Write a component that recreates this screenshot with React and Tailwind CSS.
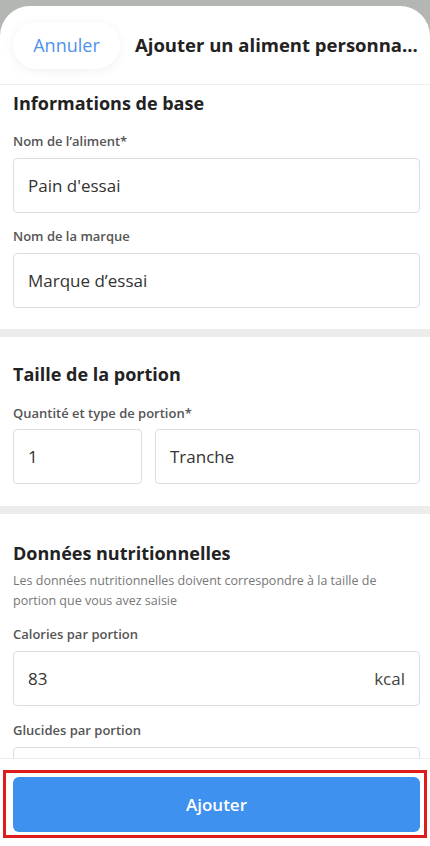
import React from "react";

const Field = ({ label, value, suffix }) => (
  <div>
    <p className="text-[13px] font-semibold text-[#555] leading-5">{label}</p>
    <div className="mt-[7px] h-[55px] border border-[#dcdde3] rounded-[4px] flex items-center justify-between px-[14px]">
      <span className="text-[17px] text-[#333]">{value}</span>
      {suffix && <span className="text-[17px] text-[#444]">{suffix}</span>}
    </div>
  </div>
);

const Band = () => <div className="h-[8px] bg-[#ececec]" />;

const App = () => {
  return (
    <div
      className="w-[430px] h-[846px] bg-[#b4b6b3] pt-[6px] overflow-hidden"
      style={{ fontFamily: "'Open Sans', Lato, sans-serif" }}
    >
      <div className="h-[840px] bg-white rounded-t-[30px] flex flex-col overflow-hidden">
        {/* header */}
        <div className="h-[79px] shrink-0 flex items-center pl-[13px] pr-2 border-b border-[#eeeeee]">
          <button className="h-[47px] w-[107px] shrink-0 rounded-full bg-white shadow-[0_2px_12px_rgba(0,0,0,0.06)] text-[18px] text-[#4d93ea]">
            Annuler
          </button>
          <h1 className="ml-[15px] text-[18.5px] font-bold text-[#222] whitespace-nowrap">
            Ajouter un aliment personna...
          </h1>
        </div>

        {/* scroll content */}
        <div className="flex-1 overflow-hidden">
          <section className="pl-[13px] pr-[10px] pt-[6px] pb-[21px]">
            <h2 className="text-[18px] font-bold text-[#222] leading-6">Informations de base</h2>
            <div className="mt-[16px] flex flex-col gap-[13px]">
              <Field label="Nom de l’aliment*" value="Pain d'essai" />
              <Field label="Nom de la marque" value="Marque d’essai" />
            </div>
          </section>
          <Band />

          <section className="pl-[13px] pr-[10px] pt-[25px] pb-[22px]">
            <h2 className="text-[18px] font-bold text-[#222] leading-6">Taille de la portion</h2>
            <p className="mt-[17px] text-[13px] font-semibold text-[#555] leading-5">
              Quantité et type de portion*
            </p>
            <div className="mt-[6px] flex gap-[13px]">
              <div className="w-[129px] h-[55px] border border-[#dcdde3] rounded-[4px] flex items-center px-[14px] text-[17px] text-[#333]">
                1
              </div>
              <div className="flex-1 h-[55px] border border-[#dcdde3] rounded-[4px] flex items-center px-[14px] text-[17px] text-[#333]">
                Tranche
              </div>
            </div>
          </section>
          <Band />

          <section className="pl-[13px] pr-[10px] pt-[27px]">
            <h2 className="text-[18px] font-bold text-[#222] leading-6">Données nutritionnelles</h2>
            <p className="mt-[6px] text-[12.5px] text-[#777] leading-5">
              Les données nutritionnelles doivent correspondre à la taille de portion que vous avez saisie
            </p>
            <div className="mt-[13px] flex flex-col gap-[14px]">
              <Field label="Calories par portion" value="83" suffix="kcal" />
              <Field label="Glucides par portion" value="" />
            </div>
          </section>
        </div>

        {/* footer */}
        <div className="shrink-0 h-[88px] bg-white border-t border-[#eeeeee] pt-[11px] pb-[8px] px-[3px]">
          <div className="h-[68px] border-[3px] border-[#e01b1b] pl-[7px] pr-[4px] pt-[4px]">
            <button className="w-full h-[55px] rounded-[6px] bg-[#3f91f0] text-white text-[17px] font-semibold">
              Ajouter
            </button>
          </div>
        </div>
      </div>
    </div>
  );
};

export default App;
